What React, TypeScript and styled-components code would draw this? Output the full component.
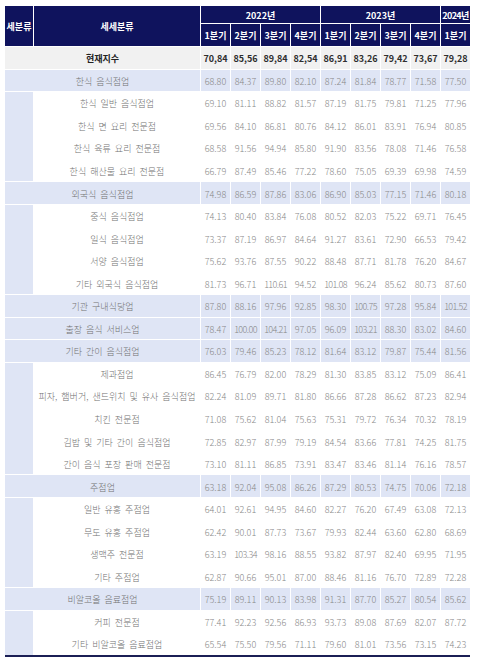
import React from "react";
import styled, { createGlobalStyle, css } from "styled-components";

const GlobalStyle = createGlobalStyle`
  html, body { margin: 0; padding: 0; background: #ffffff; }
  body { font-family: "Noto Sans CJK KR", "Noto Sans", sans-serif; }
`;

const Page = styled.div`
  padding: 6px 0 0 5px;
`;

const Grid = styled.div`
  display: grid;
  width: 465px;
  grid-template-columns: 28px 166px repeat(9, 29px);
  grid-template-rows: 17px 22px;
  grid-auto-rows: 21.56px;
  gap: 1px;
  background: #ffffff;
  border-bottom: 2px solid #1b1f55;
`;

type Variant = "head" | "total" | "cat" | "sub" | "side";

const Cell = styled.div<{ $variant: Variant; $cols?: number; $rows?: number; $tight?: boolean }>`
  display: flex;
  align-items: center;
  justify-content: center;
  box-sizing: border-box;
  padding-top: 2px;
  white-space: nowrap;
  overflow: visible;
  font-size: 9px;
  line-height: 1;
  grid-column: span ${(p) => p.$cols ?? 1};
  grid-row: span ${(p) => p.$rows ?? 1};
  letter-spacing: ${(p) => (p.$tight ? "-0.6px" : "0")};
  ${(p) =>
    p.$variant === "head" &&
    css`
      background: #0f135d;
      color: #ffffff;
      font-weight: 700;
      padding-top: 1px;
    `}
  ${(p) =>
    p.$variant === "total" &&
    css`
      background: #f1f1f1;
      color: #2e2e2e;
      font-weight: 700;
    `}
  ${(p) =>
    p.$variant === "cat" &&
    css`
      background: #dfe5f5;
      color: #888888;
      font-weight: 300;
    `}
  ${(p) =>
    p.$variant === "sub" &&
    css`
      background: #ffffff;
      color: #888888;
      font-weight: 300;
    `}
  ${(p) =>
    p.$variant === "side" &&
    css`
      background: #dfe5f5;
    `}
`;

const Label = styled.span<{ $strong?: boolean }>`
  word-spacing: 2px;
  color: ${(p) => (p.$strong ? "#222222" : "#727272")};
`;

type Row = { label: string; values: string[] };
type Group = { cat: Row; subs: Row[] };

const total: Row = {
  label: "현재지수",
  values: ["70,84", "85,56", "89,84", "82,54", "86,91", "83,26", "79,42", "73,67", "79,28"],
};

const r = (label: string, s: string): Row => ({ label, values: s.split(" ") });

const groups: Group[] = [
  {
    cat: r("한식 음식점업", "68.80 84.37 89.80 82.10 87.24 81.84 78.77 71.58 77.50"),
    subs: [
      r("한식 일반 음식점업", "69.10 81.11 88.82 81.57 87.19 81.75 79.81 71.25 77.96"),
      r("한식 면 요리 전문점", "69.56 84.10 86.81 80.76 84.12 86.01 83.91 76.94 80.85"),
      r("한식 육류 요리 전문점", "68.58 91.56 94.94 85.80 91.90 83.56 78.08 71.46 76.58"),
      r("한식 해산물 요리 전문점", "66.79 87.49 85.46 77.22 78.60 75.05 69.39 69.98 74.59"),
    ],
  },
  {
    cat: r("외국식 음식점업", "74.98 86.59 87.86 83.06 86.90 85.03 77.15 71.46 80.18"),
    subs: [
      r("중식 음식점업", "74.13 80.40 83.84 76.08 80.52 82.03 75.22 69.71 76.45"),
      r("일식 음식점업", "73.37 87.19 86.97 84.64 91.27 83.61 72.90 66.53 79.42"),
      r("서양 음식점업", "75.62 93.76 87.55 90.22 88.48 87.71 81.78 76.20 84.67"),
      r("기타 외국식 음식점업", "81.73 96.71 110.61 94.52 101.08 96.24 85.62 80.73 87.60"),
    ],
  },
  {
    cat: r("기관 구내식당업", "87.80 88.16 97.96 92.85 98.30 100.75 97.28 95.84 101.52"),
    subs: [],
  },
  {
    cat: r("출장 음식 서비스업", "78.47 100.00 104.21 97.05 96.09 103.21 88.30 83.02 84.60"),
    subs: [],
  },
  {
    cat: r("기타 간이 음식점업", "76.03 79.46 85.23 78.12 81.64 83.12 79.87 75.44 81.56"),
    subs: [
      r("제과점업", "86.45 76.79 82.00 78.29 81.30 83.85 83.12 75.09 86.41"),
      r("피자, 햄버거, 샌드위치 및 유사 음식점업", "82.24 81.09 89.71 81.80 86.66 87.28 86.62 87.23 82.94"),
      r("치킨 전문점", "71.08 75.62 81.04 75.63 75.31 79.72 76.34 70.32 78.19"),
      r("김밥 및 기타 간이 음식점업", "72.85 82.97 87.99 79.19 84.54 83.66 77.81 74.25 81.75"),
      r("간이 음식 포장 판매 전문점", "73.10 81.11 86.85 73.91 83.47 83.46 81.14 76.16 78.57"),
    ],
  },
  {
    cat: r("주점업", "63.18 92.04 95.08 86.26 87.29 80.53 74.75 70.06 72.18"),
    subs: [
      r("일반 유흥 주점업", "64.01 92.61 94.95 84.60 82.27 76.20 67.49 63.08 72.13"),
      r("무도 유흥 주점업", "62.42 90.01 87.73 73.67 79.93 82.44 63.60 62.80 68.69"),
      r("생맥주 전문점", "63.19 103.34 98.16 88.55 93.82 87.97 82.40 69.95 71.95"),
      r("기타 주점업", "62.87 90.66 95.01 87.00 88.46 81.16 76.70 72.89 72.28"),
    ],
  },
  {
    cat: r("비알코올 음료점업", "75.19 89.11 90.13 83.98 91.31 87.70 85.27 80.54 85.62"),
    subs: [
      r("커피 전문점", "77.41 92.23 92.56 86.93 93.73 89.08 87.69 82.07 87.72"),
      r("기타 비알코올 음료점업", "65.54 75.50 79.56 71.11 79.60 81.01 73.56 73.15 74.23"),
    ],
  },
];

const quarters = ["1분기", "2분기", "3분기", "4분기", "1분기", "2분기", "3분기", "4분기", "1분기"];

const Values: React.FC<{ row: Row; variant: Variant; prefix: string }> = ({ row, variant, prefix }) => (
  <>
    {row.values.map((v, i) => (
      <Cell key={`${prefix}-${i}`} $variant={variant} $tight={v.length > 5}>
        {v}
      </Cell>
    ))}
  </>
);

export default function App() {
  return (
    <>
      <GlobalStyle />
      <Page>
        <Grid>
          <Cell $variant="head" $rows={2}>세분류</Cell>
          <Cell $variant="head" $rows={2}>세세분류</Cell>
          <Cell $variant="head" $cols={4}>2022년</Cell>
          <Cell $variant="head" $cols={4}>2023년</Cell>
          <Cell $variant="head" $tight>2024년</Cell>
          {quarters.map((q, i) => (
            <Cell key={`q-${i}`} $variant="head">{q}</Cell>
          ))}

          <Cell $variant="total" $cols={2}>
            <Label $strong>{total.label}</Label>
          </Cell>
          <Values row={total} variant="total" prefix="total" />

          {groups.map((g, gi) => (
            <React.Fragment key={`g-${gi}`}>
              <Cell $variant="cat" $cols={2}>
                <Label>{g.cat.label}</Label>
              </Cell>
              <Values row={g.cat} variant="cat" prefix={`c-${gi}`} />
              {g.subs.length > 0 && <Cell $variant="side" $rows={g.subs.length} />}
              {g.subs.map((s, si) => (
                <React.Fragment key={`s-${gi}-${si}`}>
                  <Cell $variant="sub">
                    <Label>{s.label}</Label>
                  </Cell>
                  <Values row={s} variant="sub" prefix={`s-${gi}-${si}`} />
                </React.Fragment>
              ))}
            </React.Fragment>
          ))}
        </Grid>
      </Page>
    </>
  );
}
